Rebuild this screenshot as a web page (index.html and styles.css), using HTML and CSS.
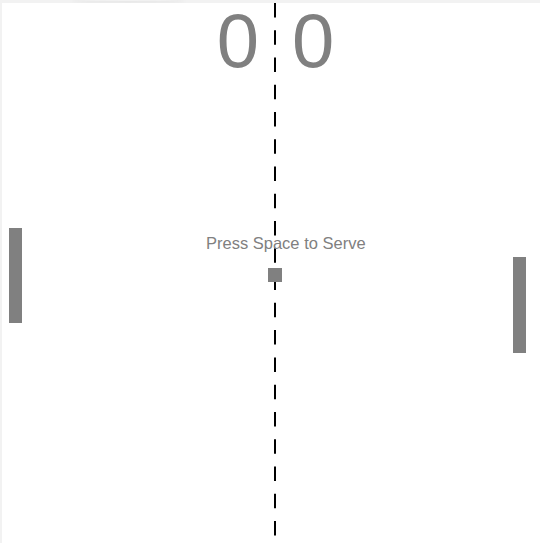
FILE: index.html
```html
<!DOCTYPE html>
<html>
<head>
<meta charset="utf-8">
<link rel="stylesheet" href="styles.css">
</head>
<body>
<div class="stage">
  <div class="shadow"></div>
  <div class="court">
    <svg class="net" width="4" height="540" viewBox="0 0 4 540">
      <line x1="2" y1="0" x2="2" y2="540" stroke="#000" stroke-width="2" stroke-dasharray="14.5 12.76"/>
    </svg>
    <div class="scores">
      <span class="score">0</span>
      <span class="score">0</span>
    </div>
    <div class="message">Press Space to Serve</div>
    <div class="paddle paddle-left"></div>
    <div class="paddle paddle-right"></div>
    <div class="ball"></div>
  </div>
</div>
</body>
</html>
```
FILE: styles.css
```css
html, body {
  margin: 0;
  padding: 0;
  overflow: hidden;
  background: #f2f2f2;
  font-family: "Liberation Sans", Arial, sans-serif;
}
.stage {
  position: relative;
  padding: 3px 0 0 2px;
  height: 543px;
  box-sizing: border-box;
}
.shadow {
  position: absolute;
  top: -3px;
  left: 70px;
  width: 116px;
  height: 4px;
  border-radius: 50%;
  box-shadow: 0 2px 4px rgba(0, 0, 0, 0.06);
}
.court {
  position: relative;
  width: 546px;
  height: 560px;
  background: #fff;
}
.net {
  position: absolute;
  left: 271px;
  top: 0;
}
.scores {
  position: absolute;
  top: 0;
  left: 0;
  width: 546px;
  display: flex;
  justify-content: center;
  gap: 33px;
  padding-left: 1px;
  box-sizing: border-box;
  font-size: 76px;
  line-height: 76px;
  color: #808080;
}
.message {
  position: absolute;
  left: 204px;
  top: 232px;
  font-size: 16.5px;
  line-height: 16px;
  color: #808080;
  white-space: nowrap;
}
.paddle {
  position: absolute;
  width: 13px;
  height: 95px;
  background: #808080;
}
.paddle-left {
  left: 7px;
  top: 225px;
}
.paddle-right {
  left: 511px;
  top: 254px;
  height: 96px;
}
.ball {
  position: absolute;
  left: 266px;
  top: 265px;
  width: 14px;
  height: 14px;
  background: #808080;
}
```
